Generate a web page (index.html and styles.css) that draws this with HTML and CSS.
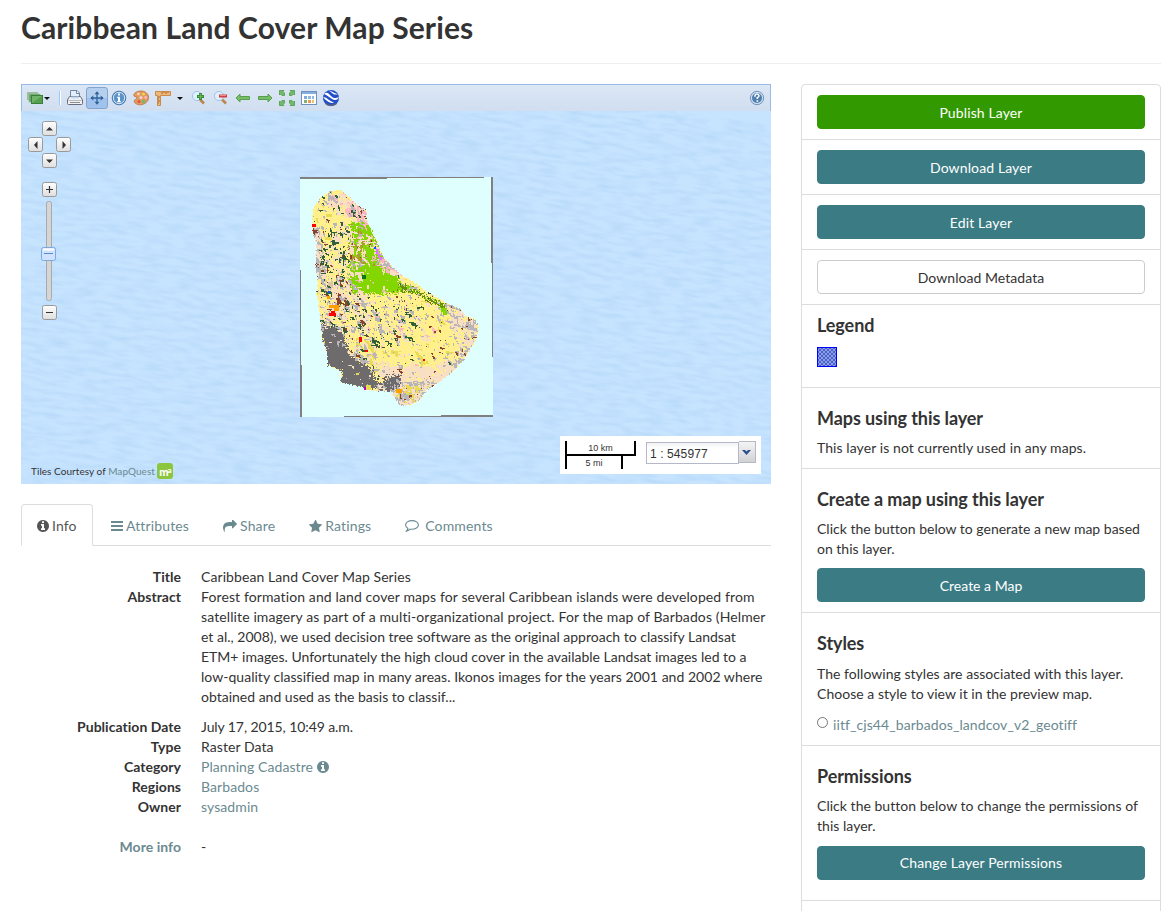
FILE: index.html
```html
<!DOCTYPE html>
<html lang="en">
<head>
<meta charset="utf-8">
<title>Caribbean Land Cover Map Series</title>
<link rel="stylesheet" href="styles.css">
</head>
<body>
<div class="page">
  <header class="page-header"><h1>Caribbean Land Cover Map Series</h1></header>
  <div class="columns">
    <main class="main">
      <section class="map-panel">
        <div class="toolbar">
          <span class="tool tool-layers"><svg width="24" height="16" viewBox="0 0 24 16"><rect x="0" y="2" width="11" height="8" fill="#9dbda3"/><rect x="2" y="4" width="11" height="8" fill="#68a66b" stroke="#92bd92" stroke-width=".6"/><rect x="4.500" y="5.500" width="11" height="8" fill="#55a04f" stroke="#3b7f3c"/><path d="M5 6h10L5 13z" fill="#71b369"/><path d="M17 7h6l-3 3z" fill="#111"/></svg></span>
          <span class="separator"></span>
          <span class="tool"><svg width="18" height="16" viewBox="0 0 18 16"><path d="M4.500 7.500V.5h6.500l2.500 2.500v4.500z" fill="#e4eefa" stroke="#7186a3"/><path d="M10.500 1v2.500H13" fill="#fff" stroke="#7186a3"/><path d="M3.500 6.500h11l2 3.500v3.500q0 1-1 1h-13q-1 0-1-1V10z" fill="#f1f1f3" stroke="#666d7c"/><path d="M5 6.500h8v2H5z" fill="#c3d8f3"/><path d="M2.500 10.500h13" stroke="#b6b8bf"/><path d="M4 12.500h10" stroke="#8b8d93"/></svg></span>
          <span class="tool tool-active"><svg width="14" height="14" viewBox="0 0 14 14"><path d="M7 1v12M1 7h12" stroke="#31639c" stroke-width="1.300"/><path d="M4.500 3.300L7 .3l2.500 3zM4.500 10.700l2.500 3 2.500-3zM3.300 4.500L.3 7l3 2.500zM10.700 4.500l3 2.500-3 2.500z" fill="#31639c"/></svg></span>
          <span class="tool"><svg width="16" height="16" viewBox="0 0 16 16"><circle cx="8" cy="8" r="6.800" fill="#4b87c3" stroke="#4677aa"/><circle cx="8" cy="8" r="5.700" fill="#5b93cb" stroke="#dceafa"/><path d="M7 3.500h2v2H7zM6 6.700h3v4.500h1v1H6v-1h1V7.700H6z" fill="#fff"/></svg></span>
          <span class="tool"><svg width="16" height="16" viewBox="0 0 16 16"><path d="M8 1C3.500 1 .5 3.500.8 5.500c.4 2 3.400.2 3.200 2.500C3.800 10 .8 9 1.200 11.500c.5 2 3.500 3.500 6.300 3.300 4.500-.3 8-3.500 8-7.300C15.500 3.500 12 1 8 1z" fill="#e29a5e" stroke="#b9703f" stroke-width=".8"/><circle cx="5.500" cy="4" r="1.400" fill="#f5d5b6"/><circle cx="10.500" cy="4" r="1.600" fill="#ead254"/><circle cx="12.700" cy="7.500" r="1.400" fill="#f8bcc0"/><circle cx="10.500" cy="11.500" r="1.800" fill="#75ba6a"/><circle cx="6" cy="11.500" r="1.600" fill="#df5448"/><circle cx="8" cy="7.500" r="1.500" fill="#eed7dd"/></svg></span>
          <span class="tool tool-measure"><svg width="32" height="16" viewBox="0 0 32 16"><path d="M1.500 1.500h15v4h-10v10h-3v-10h-2z" fill="#edb878" stroke="#c98a4c"/><path d="M8 2v2m2-2v1m2-1v2m2-2v1M4 7h2M4 9h1m-1 2h2m-2 2h1" stroke="#aa6429"/><path d="M23 7h6l-3 3z" fill="#111"/></svg></span>
          <span class="tool"><svg width="16" height="16" viewBox="0 0 16 16"><path d="M9 9.500l4 4" stroke="#bd864c" stroke-width="2.600"/><circle cx="6" cy="6" r="4.600" fill="#deefff" stroke="#a3c4e8"/><path d="M9.500 3v7M6 6.500h7" stroke="#398b37" stroke-width="2.800"/><path d="M9.500 4v5M7 6.500h5" stroke="#6ab64e"/></svg></span>
          <span class="tool"><svg width="16" height="16" viewBox="0 0 16 16"><path d="M9 9.500l4 4" stroke="#bd864c" stroke-width="2.600"/><circle cx="6" cy="6" r="4.600" fill="#deefff" stroke="#a3c4e8"/><path d="M6 6h8" stroke="#d63d43" stroke-width="3"/><path d="M7 5.500h6" stroke="#f28a88"/></svg></span>
          <span class="tool"><svg width="16" height="16" viewBox="0 0 16 16"><path d="M1 8l4-4v2.500h9.500v3H5V12z" fill="#79bd69" stroke="#55a04e"/></svg></span>
          <span class="tool"><svg width="16" height="16" viewBox="0 0 16 16"><path d="M15 8l-4-4v2.500H1.500v3H11V12z" fill="#79bd69" stroke="#55a04e"/></svg></span>
          <span class="tool"><svg width="18" height="18" viewBox="0 0 18 18"><g fill="#74b96a" stroke="#4c9c48" stroke-width=".8"><path d="M1.500 1.500h4.500l-1 1 1.500 1.500v2.500H4L2.500 5l-1 1z"/><path d="M16.500 1.500v4.500l-1-1-1.500 1.500h-2.500V4L13 2.500l-1-1z"/><path d="M1.500 16.500v-4.500l1 1L4 11.500h2.500V14L5 15.500l1 1z"/><path d="M16.500 16.500h-4.500l1-1-1.500-1.500v-2.500H14l1.500 1.500 1-1z"/></g></svg></span>
          <span class="tool"><svg width="16" height="16" viewBox="0 0 16 16"><rect x=".5" y="1.500" width="15" height="13" fill="#fff" stroke="#7290bb"/><path d="M1 3h14" stroke="#83aee3" stroke-width="2"/><path d="M3 6h3v3H3z" fill="#7cadde"/><path d="M7 6h3v3H7zM11 6h2v3h-2z" fill="#90b8dd"/><path d="M3 10h3v3H3z" fill="#7db570"/><path d="M7 10h3v3H7z" fill="#ec9757"/><path d="M11 10h2v3h-2z" fill="#e3c767"/></svg></span>
          <span class="tool"><svg width="18" height="18" viewBox="0 0 18 18"><circle cx="9" cy="9" r="8" fill="#2450c8"/><path d="M2 5c3-3 5 0 7 2s4 3 8 1c-1 3-4 4-7 2S5 6 2 5zM7 1.500c2 0 5 3 9 3.500-3 1.500-5 0-6.500-1.500zM1.200 8c4 0 5 4 11 5.500-3 1-5 0-7-1.500S2.500 10 1.200 8z" fill="#fff"/><path d="M3.500 14.500c3 2.500 8 2.500 11 0" stroke="#5d657a" stroke-width="1.500" fill="none"/></svg></span>
          <span class="tool tool-help"><svg width="16" height="16" viewBox="0 0 16 16"><circle cx="8" cy="8" r="6.700" fill="#c9ddf2" stroke="#7695bd"/><circle cx="8" cy="8" r="5" fill="#507eaf"/><path d="M6 6.700V5.300Q6.500 4 8 4t2 1.700Q10 7 8.300 7.600V9" fill="none" stroke="#fff" stroke-width="1.500"/><path d="M7.500 10.200h1.700v1.600H7.500z" fill="#fff"/></svg></span>
        </div>
        <div class="map">
          <svg class="water" width="750" height="373"><filter id="ripples" x="0" y="0" width="100%" height="100%" color-interpolation-filters="sRGB"><feTurbulence type="fractalNoise" baseFrequency="0.05 0.22" numOctaves="2" seed="5"/><feColorMatrix values="0 0 0 0 .70  0 0 0 0 .84  0 0 0 0 .97  1.500 0 0 0 -.55"/></filter><rect width="900" height="500" x="-10" y="-90" transform="rotate(8)" filter="url(#ripples)"/></svg>
          <canvas class="coverage" id="coverage" width="193" height="240"></canvas>
          <svg class="navigation" width="46" height="202" viewBox="0 0 46 202">
            <defs><linearGradient id="key" x2="0" y2="1"><stop stop-color="#fff"/><stop offset="1" stop-color="#dedede"/></linearGradient></defs>
            <g fill="url(#key)" stroke="#999"><rect x="15.500" y=".5" width="14" height="14" rx="2"/><rect x="1.500" y="16.500" width="14" height="14" rx="2"/><rect x="29.500" y="16.500" width="14" height="14" rx="2"/><rect x="15.500" y="32.500" width="14" height="14" rx="2"/><rect x="15.500" y="61.500" width="14" height="14" rx="2"/><rect x="15.500" y="184.500" width="14" height="14" rx="2"/></g>
            <path d="M19 9.500h7L22.500 6zM19 38.500h7L22.500 42zM10.500 20v8L7 24zM35.500 20v8l3.500-4z" fill="#333"/>
            <path d="M19 68.500h7M22.500 65v7M19 191.500h7" stroke="#333" stroke-width="1.200"/>
            <rect x="19.500" y="80.500" width="5" height="99" rx="2" fill="#d5d5d5" stroke="#aaa"/>
            <rect x="14.500" y="126.500" width="14" height="13" rx="2" fill="#cfe2ff" stroke="#7da7df"/><path d="M17 132.500h9" stroke="#5c8bcb"/><path d="M16 128.500h11" stroke="#fff" stroke-width="2"/>
          </svg>
          <div class="attribution">Tiles Courtesy of <a>MapQuest</a><span class="mapquest">m<sup>a</sup></span></div>
          <div class="scale-panel">
            <div class="scale-lines"><div class="scale-km">10 km</div><div class="scale-mi">5 mi</div></div>
            <div class="scale-combo"><span class="scale-value">1 : 545977</span><span class="scale-trigger"><svg width="9" height="7" viewBox="0 0 9 7"><path d="M0 1h3l1.500 1.500L6 1h3L4.500 6z" fill="#2b4e91"/></svg></span></div>
          </div>
        </div>
      </section>
      <nav class="tabs">
        <a class="tab tab-active"><svg class="icon-info" viewBox="128 128 1536 1536"><path d="M1152 1376v-160q0-14-9-23t-23-9h-96v-512q0-14-9-23t-23-9h-320q-14 0-23 9t-9 23v160q0 14 9 23t23 9h96v320h-96q-14 0-23 9t-9 23v160q0 14 9 23t23 9h448q14 0 23-9t9-23zm-128-896v-160q0-14-9-23t-23-9h-192q-14 0-23 9t-9 23v160q0 14 9 23t23 9h192q14 0 23-9t9-23zm640 416q0 209-103 385.500t-279.500 279.500-385.500 103-385.500-103-279.500-279.500-103-385.500 103-385.500 279.500-279.500 385.500-103 385.500 103 279.500 279.500 103 385.500z"/></svg>Info</a>
        <a class="tab"><svg class="icon-bars" viewBox="0 0 12 12"><path d="M0 1h12v2H0zM0 5h12v2H0zM0 9h12v2H0z"/></svg>Attributes</a>
        <a class="tab"><svg class="icon-share" viewBox="0 128 1792 1536"><path d="M1792 640q0 26-19 45l-512 512q-19 19-45 19t-45-19-19-45v-256h-224q-98 0-175.500 6t-154 21.500-133 42.500-105.500 69.500-80 101-48.500 138.500-17.500 181q0 55 5 123 0 6 2.500 23.500t2.500 26.500q0 15-8.500 25t-23.500 10q-16 0-28-17-7-9-13-22t-13.500-30-10.500-24q-127-285-127-451 0-199 53-333 162-403 875-403h224v-256q0-26 19-45t45-19 45 19l512 512q19 19 19 45z"/></svg>Share</a>
        <a class="tab"><svg class="icon-star" viewBox="64 64 1664 1664"><path d="M1728 647q0 22-26 48l-363 354 86 500q1 7 1 20 0 21-10.500 35.500t-30.500 14.500q-19 0-40-12l-449-236-449 236q-22 12-40 12-21 0-31.500-14.500t-10.500-35.500q0-6 2-20l86-500-364-354q-25-27-25-48 0-37 56-46l502-73 225-455q19-41 49-41t49 41l225 455 502 73q56 9 56 46z"/></svg>Ratings</a>
        <a class="tab"><svg class="icon-comment" viewBox="0 0 14 12"><path d="M7 .6C3.400.6.600 2.600.600 5c0 1.400.9 2.600 2.300 3.400-.2 1.200-.7 1.900-1.400 2.700C3.200 10.800 4.400 10.100 5.200 9.200 10 9.800 13.400 7.600 13.400 5 13.400 2.600 10.600.6 7 .6z"/></svg>Comments</a>
      </nav>
      <dl class="details">
        <dt>Title</dt><dd class="wide">Caribbean Land Cover Map Series</dd>
        <dt>Abstract</dt><dd class="abstract"><span class="loose">Forest formation and land cover maps for several Caribbean islands were developed from satellite imagery as part of a multi-organizational project. For the map of Barbados (Helmer</span> <span class="tight">et al., 2008), we used decision tree software as the original approach to classify Landsat ETM+ images. Unfortunately the high cloud cover in the available Landsat images led to a</span> low-quality classified map in many areas. Ikonos images for the years 2001 and 2002 where <span class="tight">obtained and used as the basis to classif...</span></dd>
        <dt>Publication Date</dt><dd class="date">July 17, 2015, 10:49 a.m.</dd>
        <dt>Type</dt><dd class="wide">Raster Data</dd>
        <dt>Category</dt><dd class="wide"><a>Planning Cadastre <svg class="icon-info" viewBox="128 128 1536 1536"><path d="M1152 1376v-160q0-14-9-23t-23-9h-96v-512q0-14-9-23t-23-9h-320q-14 0-23 9t-9 23v160q0 14 9 23t23 9h96v320h-96q-14 0-23 9t-9 23v160q0 14 9 23t23 9h448q14 0 23-9t9-23zm-128-896v-160q0-14-9-23t-23-9h-192q-14 0-23 9t-9 23v160q0 14 9 23t23 9h192q14 0 23-9t9-23zm640 416q0 209-103 385.500t-279.500 279.500-385.500 103-385.500-103-279.500-279.500-103-385.500 103-385.500 279.500-279.500 385.500-103 385.500 103 279.500 279.500 103 385.500z"/></svg></a></dd>
        <dt>Regions</dt><dd class="wide"><a>Barbados</a></dd>
        <dt>Owner</dt><dd class="owner wide"><a>sysadmin</a></dd>
        <dt><a>More info</a></dt><dd>-</dd>
      </dl>
    </main>
    <aside class="sidebar">
      <section class="item"><a class="btn btn-publish">Publish Layer</a></section>
      <section class="item"><a class="btn">Download Layer</a></section>
      <section class="item"><a class="btn">Edit Layer</a></section>
      <section class="item"><a class="btn btn-default">Download Metadata</a></section>
      <section class="item item-legend"><h4>Legend</h4><svg class="legend-swatch" width="20" height="20"><defs><pattern id="check" width="4" height="4" patternUnits="userSpaceOnUse"><rect width="4" height="4" fill="#8c9fe4"/><path d="M0 0h2v2H0zM2 2h2v2H2z" fill="#4c61cc"/></pattern></defs><rect x=".5" y=".5" width="19" height="19" fill="url(#check)" stroke="#00f"/></svg></section>
      <section class="item item-maps"><h4>Maps using this layer</h4><p class="wide">This layer is not currently used in any maps.</p></section>
      <section class="item item-create"><h4>Create a map using this layer</h4><p>Click the button below to generate a new map based on this layer.</p><a class="btn">Create a Map</a></section>
      <section class="item item-styles"><h4>Styles</h4><p>The following styles are associated with this layer. Choose a style to view it in the preview map.</p><div class="style-option"><span class="radio"></span><a>iitf_cjs44_barbados_landcov_v2_geotiff</a></div></section>
      <section class="item item-permissions"><h4>Permissions</h4><p>Click the button below to change the permissions of this layer.</p><a class="btn">Change Layer Permissions</a></section>
    </aside>
  </div>
</div>
<script src="landcover.js"></script>
</body>
</html>
```

FILE: styles.css
```css
* { box-sizing: border-box; }
body { margin: 0; background: #fff; color: #333; font: 14px/20px Lato, "Liberation Sans", sans-serif; font-variant-ligatures: none; letter-spacing: .03px; overflow: hidden; }
a { color: #6b8a90; text-decoration: none; }
h1, h4, p, dl, dd { margin: 0; }
.wide { letter-spacing: .08px; }
.page { width: 1161px; height: 911px; padding-left: 21px; overflow: hidden; }
.page-header { height: 64px; padding-top: 11px; border-bottom: 1px solid #eee; }
h1 { font-size: 30px; line-height: 33px; font-weight: 700; letter-spacing: .11px; }
.columns { display: flex; gap: 30px; margin-top: 20px; }
.main { width: 750px; }
.sidebar { width: 360px; height: 860px; border: 1px solid #ddd; border-radius: 4px; }

.map-panel { height: 400px; }
.toolbar { display: flex; align-items: center; height: 27px; padding: 0 2px 0 4px; border: 1px solid #99bbe8; border-bottom: 0; background: linear-gradient(#dce7f5, #d0def0); }
.tool { display: flex; flex: none; align-items: center; justify-content: center; width: 22px; height: 22px; }
.tool-layers { width: 26px; }
.separator { width: 2px; height: 14px; margin: 0 3px 0 7px; border-left: 1px solid #98c8ff; border-right: 1px solid #fff; }
.tool-active { border: 1px solid #81a4d0; border-radius: 3px; background: linear-gradient(#b5cfee 50%, #a1c2ec 50%); }
.tool-measure { width: 36px; }
.tool-help { margin-left: auto; }
.map { position: relative; height: 373px; background: #c7e4ff; overflow: hidden; }
.water { display: block; }
.coverage { position: absolute; left: 279px; top: 66px; }
.navigation { position: absolute; left: 6px; top: 10px; }
.attribution { position: absolute; left: 10px; bottom: 5px; display: flex; align-items: center; height: 16px; font-size: 10px; line-height: 14px; letter-spacing: .05px; white-space: pre; }
.mapquest { width: 16px; height: 16px; margin-left: 2px; border-radius: 3px; background: #8cc63f; color: #fff; font-size: 11px; font-weight: 900; line-height: 17px; text-align: center; letter-spacing: -1px; }
.mapquest sup { font-size: 8px; line-height: 0; vertical-align: 3px; }
.scale-panel { position: absolute; right: 10px; bottom: 10px; display: flex; width: 201px; height: 38px; padding: 5px; background: #fff; font-family: "Liberation Sans", sans-serif; }
.scale-lines { width: 71px; font-size: 9px; text-align: center; }
.scale-km { height: 15px; border: 2px solid #000; border-top: 0; line-height: 15px; }
.scale-mi { width: 58px; height: 13px; border: 2px solid #000; border-top: 0; border-bottom: 0; line-height: 15px; }
.scale-combo { display: flex; width: 110px; height: 22px; margin: 1px 0 0 10px; }
.scale-value { flex: 1; padding-left: 3px; border: 1px solid #b5b8c8; background: linear-gradient(#f1f1f1, #fff 5px); font-size: 12px; line-height: 22px; letter-spacing: .1px; }
.scale-trigger { display: flex; align-items: center; justify-content: center; width: 17px; height: 22px; margin-top: -1px; padding-right: 1px; border: 1px solid #b5b8c8; border-left: 0; background: linear-gradient(#f4f4f4, #d2d2d5); }

.tabs { display: flex; gap: 2px; height: 42px; margin-top: 20px; border-bottom: 1px solid #ddd; letter-spacing: .14px; }
.tab { display: flex; align-items: center; height: 42px; padding: 2px 15px 0; border: 1px solid transparent; white-space: nowrap; }
.tab-active { width: 72px; padding: 1px 15px 0; border-color: #ddd #ddd #fff; border-radius: 4px 4px 0 0; background: #fff; color: #555; }
.tab svg { flex: none; margin-right: 3px; }
.icon-info { width: 12px; height: 12px; fill: currentColor; }
.icon-bars { width: 12px; height: 12px; fill: currentColor; }
.icon-share { width: 14px; height: 12px; fill: currentColor; }
.icon-star { width: 13px; height: 13px; fill: currentColor; }
.tab .icon-comment { width: 14px; height: 12px; margin-right: 6px; fill: none; stroke: currentColor; stroke-width: 1.1; }
.details { display: grid; grid-template-columns: 160px 570px; column-gap: 20px; margin-top: 21px; }
.details dt { font-weight: 700; text-align: right; }
.details .abstract { margin-bottom: 10px; }
.loose { letter-spacing: .115px; }
.tight { letter-spacing: 0; }
.details .date { letter-spacing: -.09px; }
.details .owner { margin-bottom: 20px; }
.details svg { vertical-align: -1px; }

.item { height: 55px; padding: 10px 15px; border-bottom: 1px solid #ddd; }
.item h4 { margin: 10px 0; font-size: 18px; line-height: 20px; font-weight: 700; letter-spacing: -.08px; }
.btn { display: block; height: 34px; border: 1px solid #3b7b84; border-radius: 4px; background: #3b7b84; color: #fff; line-height: 34px; text-align: center; letter-spacing: .12px; }
.btn-publish { border-color: #329a00; background: #329a00; }
.btn-default { border-color: #ccc; background: #fff; color: #333; letter-spacing: .05px; }
.item-legend { height: 83px; }
.item-legend h4 { margin-top: 0; }
.legend-swatch { display: block; margin-top: 12px; }
.item-maps { height: 81px; }
.item-create { height: 144px; }
.item-create p { letter-spacing: 0; }
.item-create .btn { margin-top: 9px; letter-spacing: 0; }
.item-styles { height: 133px; }
.item-styles h4 { margin-bottom: 11px; }
.style-option { display: flex; margin-top: 11px; letter-spacing: .08px; }
.radio { width: 11px; height: 11px; margin: 2px 5px 0 0; border: 1px solid #777; border-radius: 50%; }
.item-permissions { height: 155px; }
.item-permissions .btn { margin-top: 10px; line-height: 32px; }
```

FILE: landcover.js
```js
// Land cover raster: each cell is painted from the class mix of its district.
const ctx = document.getElementById("coverage").getContext("2d");
const coast = [[12,33],[20,21],[30,14],[41,13],[50,21],[58,29],[66,33],[67,43],[73,56],[78,68],[84,80],[93,91],[101,98],[113,104],[124,113],[138,121],[149,127],[158,131],[166,139],[176,143],[179,154],[174,166],[166,180],[155,193],[142,203],[127,213],[120,223],[110,228],[100,229],[95,221],[92,215],[73,214],[65,211],[40,205],[42,194],[28,189],[27,176],[22,163],[20,140],[17,116],[18,106],[16,93],[16,66],[13,56]];
const districts = [
  [[[18,86],[55,86],[60,122],[18,128]], "yellow:30 tan:22 grey:22 forest:16 brown:4 beige:8"],
  [[[16,55],[48,48],[52,100],[16,98]], "yellow:54 tan:16 forest:17 grey:8 brown:3"],
  [[[12,50],[19,50],[21,100],[14,100]], "grey:60 tan:25 brown:5 forest:8"],
  [[[50,44],[68,44],[82,82],[96,97],[104,114],[70,117],[50,116],[49,90]], "lime:60 tan:14 beige:9 grey:9 olive:6 pink:3 brown:2"],
  [[[49,66],[64,66],[62,82],[50,84]], "olive:45 lime:30 tan:25 brown:8"],
  [[[76,80],[84,80],[98,98],[88,100]], "pink:35 tan:35 grey:20 beige:10"],
  [[[50,92],[76,88],[98,100],[100,115],[62,118]], "lime:90 beige:5 tan:5"],
  [[[46,20],[66,33],[67,44],[46,38]], "pink:30 tan:25 grey:20 brown:10 forest:8"],
  [[[20,16],[44,13],[50,28],[35,32],[22,27]], "tan:60 yellow:15 pink:10 grey:10 forest:6"],
  [[[18,122],[65,116],[72,160],[20,150]], "yellow:30 grey:24 tan:27 forest:11 brown:5"],
  [[[66,120],[112,122],[110,165],[70,170]], "yellow:62 tan:12 grey:14 forest:6 brown:3 pink:2"],
  [[[48,158],[76,160],[76,186],[55,185]], "yellow:27 tan:22 grey:22 forest:8 brown:6 gold:14"],
  [[[19,145],[42,153],[50,178],[70,190],[78,210],[65,213],[40,206],[42,194],[26,189]], "slate:93 tan:4 grey:3"],
  [[[75,187],[125,189],[153,180],[160,186],[130,214],[105,210],[78,199]], "tan:82 yellow:10 grey:5 brown:3"],
  [[[76,205],[100,205],[100,216],[78,215]], "slate:65 grey:20 tan:15"],
  [[[84,199],[101,198],[99,205],[84,206]], "slate:92 grey:8"],
  [[[91,214],[110,205],[138,200],[122,222],[105,228],[94,222]], "tan:45 grey:31 gold:17 brown:7"],
  [[[145,124],[175,143],[178,157],[163,182],[153,193],[145,181],[163,164],[150,150]], "tan:45 grey:30 yellow:18 brown:5 forest:3"],
  [[[95,107],[109,108],[128,120],[145,127],[147,135],[132,125],[112,115],[96,114]], "moss:60 lime:30 grey:10"]
];
const colours = {yellow:"#fff08b",tan:"#f8dfc3",grey:"#b7b5b8",forest:"#315f36",brown:"#8c4229",beige:"#dfc4a4",lime:"#83d600",olive:"#ac9b2c",pink:"#ffb4c2",slate:"#6d6b6b",gold:"#eadb55",moss:"#679000"};
function inside(x, y, polygon) {
  let hit = false;
  for (let i = 0, j = polygon.length - 1; i < polygon.length; j = i++) {
    const [ax, ay] = polygon[i], [bx, by] = polygon[j];
    if ((ay > y) !== (by > y) && x < (bx - ax) * (y - ay) / (by - ay) + ax) hit = !hit;
  }
  return hit;
}
let state = 71;
function random() {
  state = (state + 0x6d2b79f5) | 0;
  let t = Math.imul(state ^ (state >>> 15), 1 | state);
  t = (t + Math.imul(t ^ (t >>> 7), 61 | t)) ^ t;
  return ((t ^ (t >>> 14)) >>> 0) / 4294967296;
}
function pick(mix) {
  const entries = mix.split(" ").map(part => part.split(":"));
  let value = random() * entries.reduce((sum, entry) => sum + Number(entry[1]), 0);
  for (const [name, weight] of entries) {
    value -= Number(weight);
    if (value <= 0) return name;
  }
  return entries[0][0];
}
ctx.fillStyle = "#dfffff";
ctx.fillRect(0, 0, 193, 240);
// Cells often continue the class above or to the left, which forms small clumps.
let above = [];
for (let y = 12; y < 231; y++) {
  const row = [];
  for (let x = 8; x < 182; x++) {
    let mix = "yellow:80 tan:6 grey:6 forest:2 brown:2 gold:4 pink:1";
    const dx = x + random() * 5 - 2.5, dy = y + random() * 5 - 2.5;
    for (const [polygon, blend] of districts) if (inside(dx, dy, polygon)) mix = blend;
    const choice = random();
    let cover;
    if (choice < .36 && above[x] && mix.includes(above[x])) cover = above[x];
    else if (choice > .62 && row[x - 1] && mix.includes(row[x - 1])) cover = row[x - 1];
    else cover = pick(mix);
    row[x] = cover;
    if (inside(x + random() * 1.6 - .3, y + random() * 1.6 - .3, coast)) {
      ctx.fillStyle = colours[cover];
      ctx.fillRect(x, y, 1, 1);
    }
  }
  above = row;
}
// Distinct patches: colour, x, y, width, height.
[["#f00",12,47,4,3],["#ff9f00",29,128,10,3],["#ff9f00",34,131,5,3],["#f00",31,134,4,5],["#f00",29,136,7,3],["#f00",59,160,3,5],["#f00",65,173,3,2],["#f00",123,182,2,2],["#087b16",62,98,4,4],["#005bff",74,70,2,2],["#e76eff",76,72,2,5],["#e76eff",78,77,2,4],["#e76eff",80,80,2,3],["#005bff",28,114,2,2],["#ff9f00",27,119,3,3],["#ff9f00",96,212,6,4],["#b800b8",64,210,2,3],["#eadb55",66,208,5,5],["#eadb55",56,196,3,2],["#eadb55",26,37,6,3],["#eadb55",25,60,7,3],["#83d600",141,131,5,4],["#83d600",143,134,4,4]].forEach(([colour,x,y,w,h]) => {
  ctx.fillStyle = colour;
  ctx.fillRect(x,y,w,h);
});
ctx.fillStyle = "#808080";
[[0,0,87,2],[87,0,97,1],[191,0,2,86],[192,86,1,94],[0,93,1,95],[0,188,2,52],[44,239,149,1],[141,238,52,2]].forEach(strip => ctx.fillRect(...strip));
```
